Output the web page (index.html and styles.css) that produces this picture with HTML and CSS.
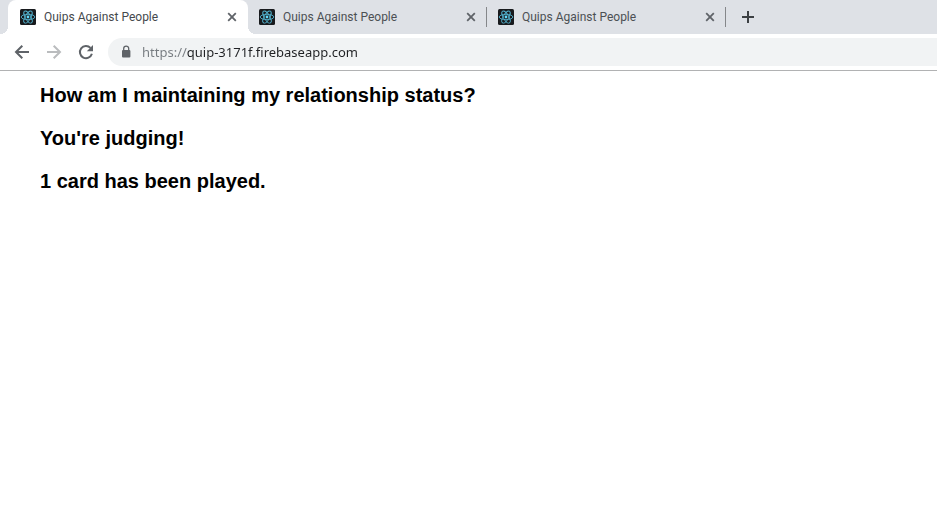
FILE: index.html
```
<!DOCTYPE html>
<html lang="en">
<head>
<meta charset="utf-8">
<meta name="viewport" content="width=device-width, initial-scale=1">
<title>Quips Against People</title>
<link rel="stylesheet" href="styles.css">
</head>
<body>
<svg class="defs" width="0" height="0" aria-hidden="true">
  <symbol id="atom" viewBox="0 0 16 16">
    <rect width="16" height="16" rx="1.5" fill="#181a1d"/>
    <g fill="none" stroke="#53b3cf" stroke-width="0.9">
      <ellipse cx="8" cy="8" rx="6.8" ry="2.7"/>
      <ellipse cx="8" cy="8" rx="6.8" ry="2.7" transform="rotate(60 8 8)"/>
      <ellipse cx="8" cy="8" rx="6.8" ry="2.7" transform="rotate(120 8 8)"/>
    </g>
    <circle cx="8" cy="8" r="1.4" fill="#61dafb"/>
  </symbol>
  <symbol id="cross" viewBox="0 0 16 16">
    <path d="M4.2 4.2l7.6 7.6M11.8 4.2l-7.6 7.6" fill="none" stroke="#5f6368" stroke-width="1.8"/>
  </symbol>
</svg>
<header>
  <nav class="tabs" aria-label="Tabs">
    <div class="tab active">
      <button class="tab-title" type="button"><svg class="icon" aria-hidden="true"><use href="#atom"/></svg>Quips Against People</button>
      <button class="tab-close" type="button" aria-label="Close tab"><svg class="icon"><use href="#cross"/></svg></button>
    </div>
    <div class="tab divided">
      <button class="tab-title" type="button"><svg class="icon" aria-hidden="true"><use href="#atom"/></svg>Quips Against People</button>
      <button class="tab-close" type="button" aria-label="Close tab"><svg class="icon"><use href="#cross"/></svg></button>
    </div>
    <div class="tab divided">
      <button class="tab-title" type="button"><svg class="icon" aria-hidden="true"><use href="#atom"/></svg>Quips Against People</button>
      <button class="tab-close" type="button" aria-label="Close tab"><svg class="icon"><use href="#cross"/></svg></button>
    </div>
    <button class="new-tab" type="button" aria-label="New tab"><svg class="icon" viewBox="0 0 16 16"><path d="M8 2v12M2 8h12" stroke="#3c4043" stroke-width="2" fill="none"/></svg></button>
  </nav>
  <form class="toolbar">
    <button class="nav" type="button" aria-label="Back"><svg class="icon" viewBox="0 0 16 16"><path d="M15 8H2.5M8.3 1.7L2 8l6.3 6.3" fill="none" stroke="#5f6368" stroke-width="2"/></svg></button>
    <button class="nav" type="button" aria-label="Forward" disabled><svg class="icon" viewBox="0 0 16 16"><path d="M1 8h12.5M7.7 1.7L14 8l-6.3 6.3" fill="none" stroke="#babcbe" stroke-width="2"/></svg></button>
    <button class="nav" type="button" aria-label="Reload"><svg class="icon" viewBox="0 0 16 16"><path d="M13.9 9.8A6.1 6.1 0 1 1 12.5 3.9" fill="none" stroke="#5f6368" stroke-width="2"/><path d="M15 1v6.2H8.8z" fill="#5f6368"/></svg></button>
    <label class="address">
      <svg class="icon" viewBox="0 0 16 16" aria-hidden="true"><rect x="4" y="6" width="8.4" height="7.6" rx="1" fill="#5f6368"/><path d="M5.7 6.5V4.6a2.5 2.5 0 0 1 5 0v1.9" fill="none" stroke="#5f6368" stroke-width="1.3"/></svg>
      <input type="text" aria-label="Address" value="https://quip-3171f.firebaseapp.com" spellcheck="false">
    </label>
  </form>
</header>
<main>
  <h1>How am I maintaining my relationship status?</h1>
  <h2>You're judging!</h2>
  <h2>1 card has been played.</h2>
</main>
</body>
</html>
```
FILE: styles.css
```
* {
  box-sizing: border-box;
}

body {
  margin: 0;
  background: #fff;
  color: #000;
  font-family: "Liberation Sans", Arial, sans-serif;
}

.defs {
  position: absolute;
}

.icon {
  display: block;
  flex: none;
  width: 16px;
  height: 16px;
}

button {
  display: flex;
  align-items: center;
  padding: 0;
  border: 0;
  background: none;
  color: inherit;
  font: inherit;
}

.tabs {
  display: flex;
  height: 34px;
  padding-left: 8px;
  background: #dee1e6;
  color: #4c5054;
  font: 12px/16px Roboto, "Open Sans", sans-serif;
}

.tab {
  position: relative;
  display: flex;
  align-items: center;
  flex: 0 1 239px;
  min-width: 0;
  padding: 0 8px 0 11px;
}

.active {
  flex-basis: 240px;
  padding-left: 12px;
  border-radius: 8px 8px 0 0;
  background: #fff;
  color: #45494d;
}

/* Flared feet where the active tab meets the toolbar */
.active::before,
.active::after {
  content: "";
  position: absolute;
  bottom: 0;
  width: 8px;
  height: 8px;
}

.active::before {
  right: 100%;
  background: radial-gradient(circle at 0 0, transparent 8px, #fff 8px);
}

.active::after {
  left: 100%;
  background: radial-gradient(circle at 100% 0, transparent 8px, #fff 8px);
}

.divided::after {
  content: "";
  position: absolute;
  top: 7px;
  right: 0;
  width: 1px;
  height: 20px;
  background: #85878a;
}

.tab-title {
  flex: 1;
  gap: 8px;
  min-width: 0;
  overflow: hidden;
  white-space: nowrap;
}

.new-tab {
  width: 28px;
  margin-left: 8px;
  justify-content: center;
}

.toolbar {
  display: flex;
  align-items: center;
  height: 37px;
  margin: 0;
  padding: 0 0 1px 6px;
  border-bottom: 1px solid #b1b2b3;
}

.nav {
  justify-content: center;
  width: 32px;
  height: 28px;
}

.address {
  display: flex;
  flex: 1;
  align-items: center;
  gap: 8px;
  height: 28px;
  margin-left: 6px;
  padding-left: 10px;
  border-radius: 14px 0 0 14px;
  background: #f1f3f4;
}

/* The scheme is dimmed, the host is dark */
.address input {
  flex: 1;
  min-width: 0;
  height: 20px;
  padding: 0;
  border: 0;
  outline: 0;
  background: linear-gradient(90deg, #767b80 45px, #202124 45px);
  -webkit-background-clip: text;
  background-clip: text;
  color: transparent;
  font: 13px/20px "Noto Sans", "Open Sans", sans-serif;
}

main {
  padding: 13px 40px;
}

h1,
h2 {
  margin: 0 0 20px;
  font-size: 20px;
  line-height: 23px;
}
```
